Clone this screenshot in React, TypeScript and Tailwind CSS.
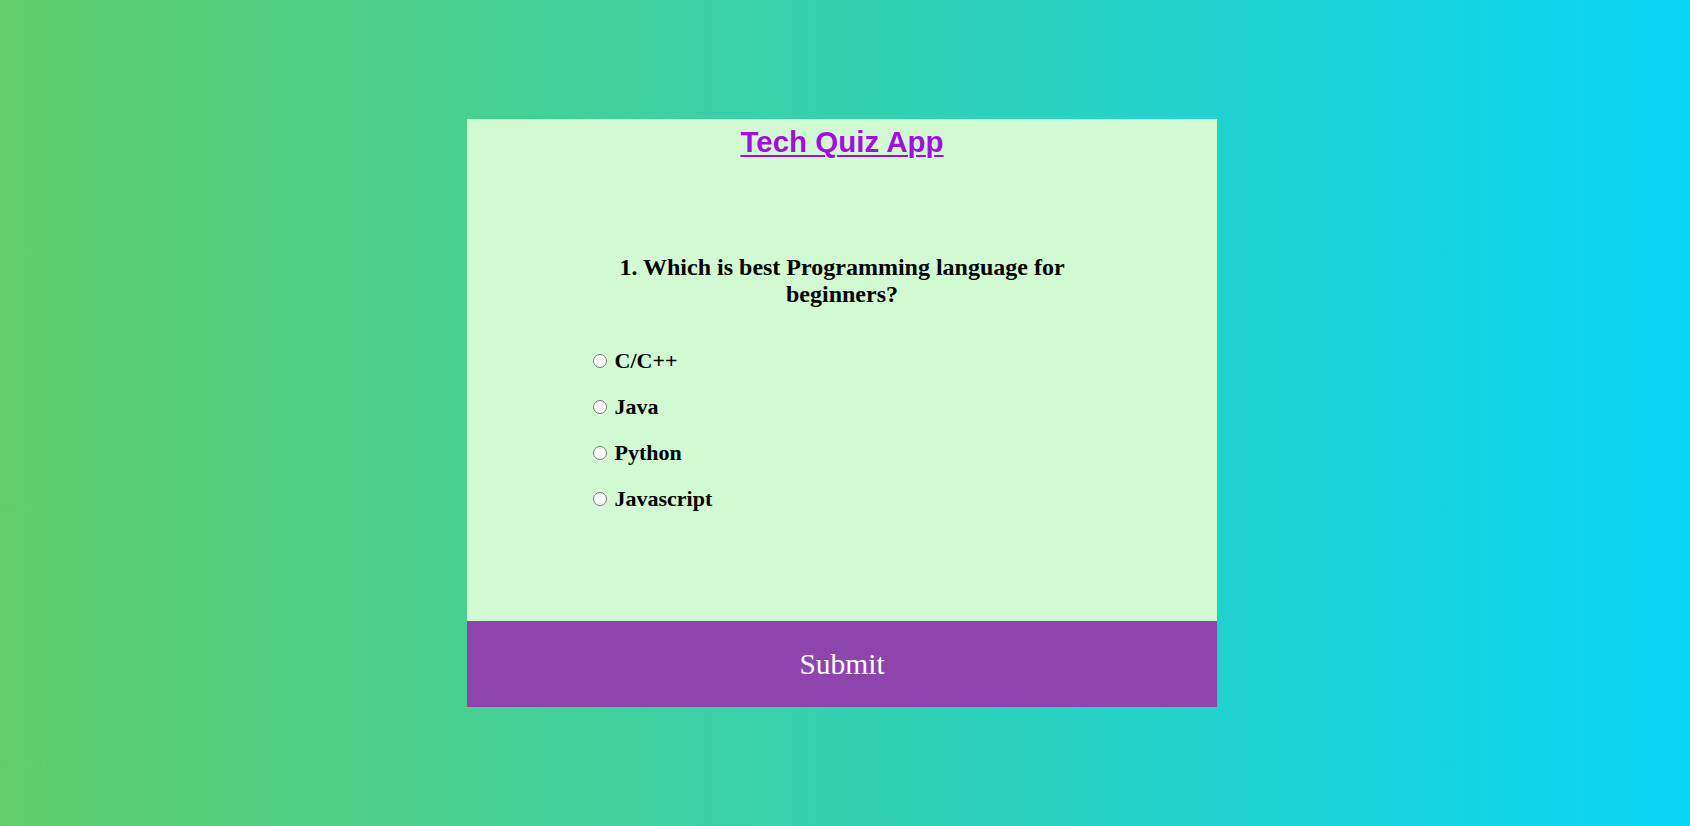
import React from "react";

const options = ["C/C++", "Java", "Python", "Javascript"];

export default function App() {
  return (
    <div className="min-h-screen w-full flex items-center justify-center pr-[6px] bg-[linear-gradient(to_right,#60ce6a,#08d4f5)]">
      <div className="w-[750px] h-[588px] flex flex-col bg-[#d2fad2]">
        <div className="flex-1 flex flex-col">
          <h1 className="pt-[6px] text-center font-['Liberation_Sans',Arial,sans-serif] font-bold text-[29.5px] leading-[33px] text-[#a20ee0] underline decoration-[2px] underline-offset-[3px]">
            Tech Quiz App
          </h1>
          <div className="w-[508px] mx-auto mt-[96px] font-['Liberation_Serif','Times_New_Roman',serif] text-black">
            <h2 className="text-center font-bold text-[24px] leading-[27px]">
              1. Which is best Programming language for beginners?
            </h2>
            <div className="mt-[40px] flex flex-col gap-[21px]">
              {options.map((o) => (
                <label key={o} className="block font-bold text-[22px] leading-[25px]">
                  <input type="radio" name="answer" className="ml-[5px] mr-[2px] mt-[3px] w-[14px] h-[14px] align-baseline" />{" "}
                  {o}
                </label>
              ))}
            </div>
          </div>
        </div>
        <button className="h-[86px] w-full bg-[#8e44ad] text-white font-['Liberation_Serif','Times_New_Roman',serif] text-[29.5px]">
          Submit
        </button>
      </div>
    </div>
  );
}
